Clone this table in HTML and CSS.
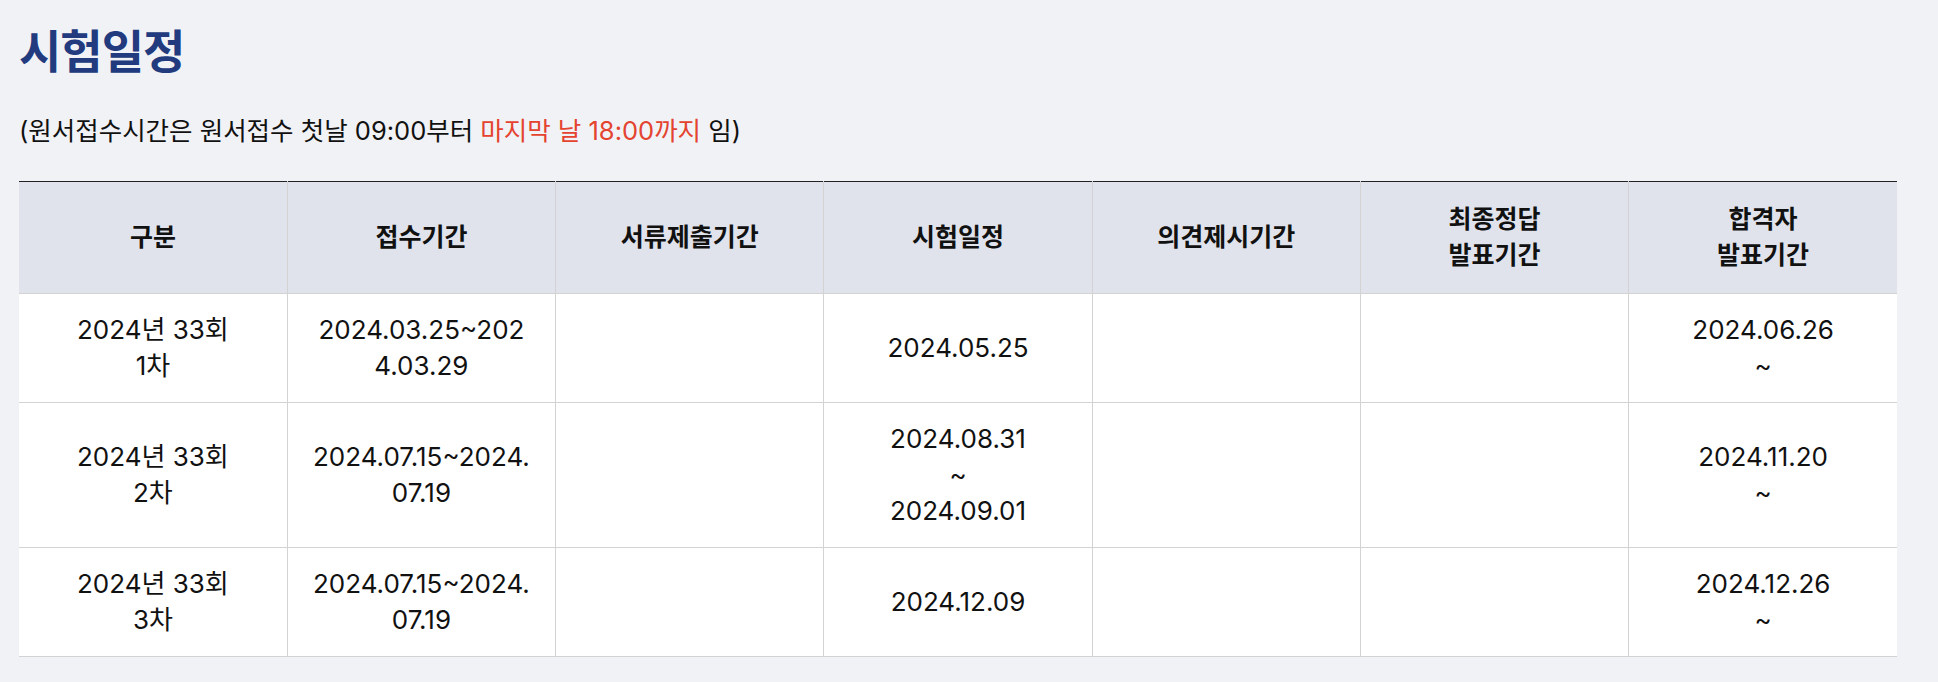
FILE: index.html
```html
<!DOCTYPE html>
<html lang="ko">
<head>
<meta charset="utf-8">
<title>시험일정</title>
<link rel="stylesheet" href="styles.css">
</head>
<body>
<div class="page">
  <h1 class="title">시험일정</h1>
  <p class="note">(원서접수시간은 원서접수 첫날 09:00부터 <span class="red">마지막 날 18:00까지</span> 임)</p>
  <table class="schedule">
    <thead>
      <tr>
        <th>구분</th>
        <th>접수기간</th>
        <th>서류제출기간</th>
        <th>시험일정</th>
        <th>의견제시기간</th>
        <th>최종정답<br>발표기간</th>
        <th>합격자<br>발표기간</th>
      </tr>
    </thead>
    <tbody>
      <tr>
        <td>2024년 33회<br>1차</td>
        <td>2024.03.25~202<br>4.03.29</td>
        <td></td>
        <td>2024.05.25</td>
        <td></td>
        <td></td>
        <td>2024.06.26<br>~</td>
      </tr>
      <tr>
        <td>2024년 33회<br>2차</td>
        <td>2024.07.15~2024.<br>07.19</td>
        <td></td>
        <td>2024.08.31<br>~<br>2024.09.01</td>
        <td></td>
        <td></td>
        <td>2024.11.20<br>~</td>
      </tr>
      <tr>
        <td>2024년 33회<br>3차</td>
        <td>2024.07.15~2024.<br>07.19</td>
        <td></td>
        <td>2024.12.09</td>
        <td></td>
        <td></td>
        <td>2024.12.26<br>~</td>
      </tr>
    </tbody>
  </table>
</div>
</body>
</html>
```
FILE: styles.css
```css
html, body {
  margin: 0;
  background: #f1f2f6;
}
body {
  font-family: Inter, "Noto Sans CJK KR", sans-serif;
  color: #111;
}
.page {
  padding: 21px 41px 20px 19px;
}
.title {
  margin: 0;
  font-size: 46px;
  line-height: 60px;
  font-weight: 700;
  color: #223a7e;
  letter-spacing: -1px;
}
.note {
  margin: 33px 0 0;
  font-size: 25.5px;
  line-height: 34px;
  color: #111;
}
.note .red {
  color: #e4432f;
}
.schedule {
  width: 100%;
  margin-top: 33px;
  border-collapse: collapse;
  table-layout: fixed;
  border-top: 1px solid #222;
}
.schedule th,
.schedule td {
  border: 1px solid #d3d3d3;
  padding: 18px 10px;
  text-align: center;
  vertical-align: middle;
  font-size: 26px;
  line-height: 36px;
}
.schedule th:first-child,
.schedule td:first-child {
  border-left: none;
}
.schedule th:last-child,
.schedule td:last-child {
  border-right: none;
}
.schedule thead th {
  padding: 19px 10px 20px;
  border-top: 1px solid #222;
  background: #e0e3ec;
  font-size: 25px;
  font-weight: 700;
}
.schedule td {
  background: #fff;
  font-weight: 400;
}
```
